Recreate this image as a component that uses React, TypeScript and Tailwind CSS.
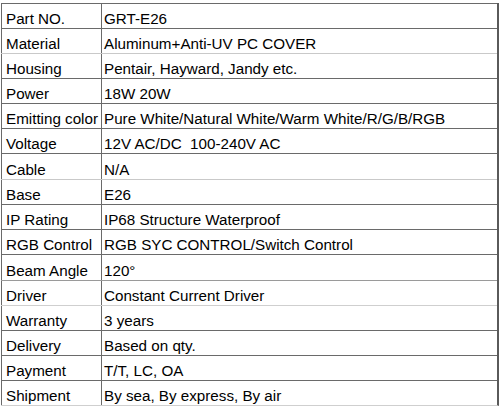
import React from "react";

type Row = {
  label: string;
  value: string;
  line: string;
  h?: string;
};

const rows: Row[] = [
  { label: "Part NO.", value: "GRT-E26", line: "border-[#6a6a6a]" },
  { label: "Material", value: "Aluminum+Anti-UV PC COVER", line: "border-[#6a6a6a]" },
  { label: "Housing", value: "Pentair, Hayward, Jandy etc.", line: "border-[#c9c9c9]" },
  { label: "Power", value: "18W 20W", line: "border-[#6a6a6a]" },
  { label: "Emitting color", value: "Pure White/Natural White/Warm White/R/G/B/RGB", line: "border-[#6a6a6a]" },
  { label: "Voltage", value: "12V AC/DC\u00a0\u00a0100-240V AC", line: "border-[#6a6a6a]" },
  { label: "Cable", value: "N/A", line: "border-[#6a6a6a]", h: "h-[26px]" },
  { label: "Base", value: "E26", line: "border-[#c9c9c9]" },
  { label: "IP Rating", value: "IP68 Structure Waterproof", line: "border-[#6a6a6a]" },
  { label: "RGB Control", value: "RGB SYC CONTROL/Switch Control", line: "border-[#6a6a6a]" },
  { label: "Beam Angle", value: "120°", line: "border-[#6a6a6a]", h: "h-[26px]" },
  { label: "Driver", value: "Constant Current Driver", line: "border-[#9a9a9a]" },
  { label: "Warranty", value: "3 years", line: "border-[#cfcfcf]" },
  { label: "Delivery", value: "Based on qty.", line: "border-[#6a6a6a]" },
  { label: "Payment", value: "T/T, LC, OA", line: "border-[#6a6a6a]" },
  { label: "Shipment", value: "By sea, By express, By air", line: "border-[#6a6a6a]" },
];

const App = () => {
  return (
    <div className="w-[500px] h-[408px] bg-white pt-[3px] pl-[1px] font-['Liberation_Sans',Arial,sans-serif] text-[15.2px] text-black overflow-hidden">
      <div className="w-[498px] border-r-2 border-b border-r-[#5a5a5a] border-b-[#cfcfcf]">
        {rows.map((row) => (
          <div
            key={row.label}
            className={`flex border-t ${row.line} ${row.h ?? "h-[25px]"}`}
          >
            <div className="w-[101px] border-l border-r border-[#6a6a6a] flex items-end pl-[4px] pb-[1px] leading-[16px] whitespace-nowrap">
              {row.label}
            </div>
            <div className="flex-1 flex items-end pl-[2px] pb-[1px] leading-[16px] whitespace-nowrap">
              {row.value}
            </div>
          </div>
        ))}
      </div>
    </div>
  );
};

export default App;
